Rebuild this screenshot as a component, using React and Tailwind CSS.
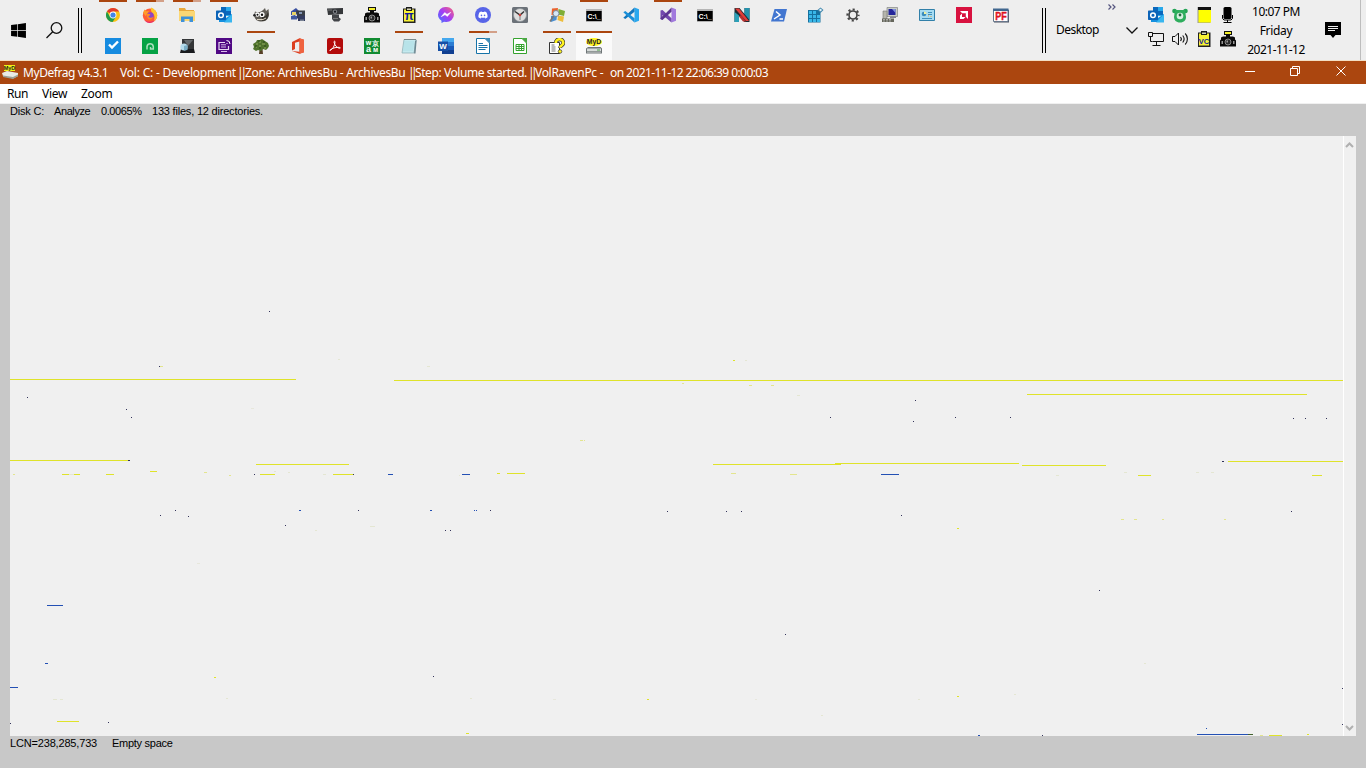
import React from "react";
import { FaDiscord, FaWindows } from "react-icons/fa";

const Svg = ({ children, className = "h-4 w-4" }) => (
  <svg viewBox="0 0 16 16" className={"block shrink-0 " + className}>
    {children}
  </svg>
);

const T = ({ x, y, s, f = "#fff", children, w = "700" }) => (
  <text x={x} y={y} fontSize={s} fill={f} fontWeight={w} textAnchor="middle" fontFamily="Liberation Sans, sans-serif">
    {children}
  </text>
);

const Chrome = () => (
  <Svg>
    <circle cx="8" cy="8" r="7" fill="#fbc116" />
    <path d="M8 8 1.9 4.5A7 7 0 0 1 14.1 4.5H8z" fill="#e33b2e" />
    <path d="M1.9 4.5A7 7 0 0 0 7.6 15L11 9.8 8 8 5 9.7z" fill="#229a4b" />
    <circle cx="8" cy="8" r="3.4" fill="#fff" />
    <circle cx="8" cy="8" r="2.6" fill="#4285e8" />
  </Svg>
);
const Firefox = () => (
  <Svg>
    <circle cx="8" cy="8.6" r="7.2" fill="#ff5b36" />
    <path d="M9 .6c3 1 6.2 4 6.2 7.6 0 3-1.700 5.200-3.600 6.200 1.600-3 1.300-6-.7-7.800C9.500 5.200 8.500 3.600 9 .6z" fill="#ffc52e" />
    <path d="M1 5.500 2.600 2.500 4.500 4.200 7 4 5.500 6.500l-2 2.500z" fill="#ff9a2a" />
    <circle cx="8.300" cy="8.600" r="3.400" fill="#8b46c9" />
    <path d="M4.500 7.300c1.500-.8 3-.5 4 .5L6.300 9.500c1 1.600 3.500 1.500 5 .3-.6 2-2 2.700-3.500 2.600-2-.2-3.500-2.200-3.300-5.100z" fill="#ff8a23" />
    <path d="M2.500 13c3 2.500 7.500 2.500 10.300-.3-1 2.300-3.200 3.200-5.300 3.200-2 0-3.800-1-5-2.900z" fill="#e8266d" />
  </Svg>
);
const Folder = () => (
  <Svg>
    <path d="M0 1h6l1 2h8v5H0z" fill="#e9a93c" />
    <path d="M0 4h16v10H0z" fill="#fbd774" />
    <path d="M2 15v-5.500h12V15h-3.500v-3h-5v3z" fill="#3f92d8" />
  </Svg>
);
const Outlook = () => (
  <Svg>
    <path d="M5 0h10v9H5z" fill="#28a8ea" />
    <path d="M5 0h5v4H5zM10 4h5v4h-5z" fill="#0a68bd" />
    <path d="M3 7l7 4 6-4v8H3z" fill="#1590df" />
    <path d="M16 7v8.500H8z" fill="#38b6ef" />
    <rect x="0" y="3.500" width="10" height="9.500" rx=".7" fill="#0b63b8" />
    <circle cx="5" cy="8.200" r="2.300" fill="none" stroke="#fff" strokeWidth="1.500" />
  </Svg>
);
const Gimp = () => (
  <Svg>
    <path d="M1 8 2 4.500C5 6 9 5 12 1l1 3 2.500-2L16 7c0 4-2.500 7.500-7 7.500S2 13 1 8z" fill="#5f5c56" />
    <path d="M9 10c3 0 5-2 6-5l.5 3c-.5 4-3 6-6.500 6z" fill="#37352f" />
    <circle cx="4.300" cy="7.500" r="2.200" fill="#fff" />
    <circle cx="9" cy="7.500" r="2.600" fill="#fff" />
    <circle cx="4.500" cy="7.700" r="1" fill="#111" />
    <circle cx="9" cy="7.700" r="1.200" fill="#111" />
    <circle cx="1.500" cy="8.300" r="1.300" fill="#222" />
    <path d="M4 12.500h6l3-1.500" stroke="#d8d0c0" strokeWidth="1" fill="none" />
  </Svg>
);
const Scanner = () => (
  <Svg>
    <path d="M1 4.500 6 1l3 3-4 5-4-1z" fill="#3a50a0" />
    <path d="M2 5h4v3H2z" fill="#e9d466" />
    <path d="M6 3.500h9v5.500H7z" fill="#393e48" />
    <path d="M9 5h3v2H9z" fill="#8395b5" />
    <path d="M1 9h6v3.500H1z" fill="#3f58a0" />
    <path d="M7 8.500h8v3H7zM8 11h7v3H8z" fill="#333b60" />
    <path d="M10 12.500h4v1.500h-4z" fill="#798293" />
  </Svg>
);
const Webcam = () => (
  <Svg>
    <path d="M0 1.500 16 1v6L1 8z" fill="#35373a" />
    <circle cx="8" cy="4.700" r="2.200" fill="#808388" />
    <circle cx="8" cy="4.700" r="1.100" fill="#16191f" />
    <path d="M5 7.500h7v3l2 1.500-2 2.500H7L5 12z" fill="#424448" />
    <path d="M1 2.500h4v1H1zM6 11h5v1H6z" fill="#777" />
  </Svg>
);
const Camera = () => (
  <Svg>
    <path d="M4 0h8v4H4z" fill="#111" />
    <path d="M5 1h6v2H5z" fill="#f4f02a" />
    <path d="M6 4h4v2H6zM1 6.500 3 5.500h10l2 1v2l1 1v6H0v-6l1-1z" fill="#0a0a0a" />
    <circle cx="8" cy="11" r="3" fill="#2a2a2a" stroke="#a5a5a5" strokeWidth=".8" />
    <path d="M6.500 9.500h1.500v2H6.500zM1.500 10H3v3H1.500zM13 10h1.500v3H13z" fill="#999" />
  </Svg>
);
const Clip = ({ t = "π" }) => (
  <Svg>
    <path d="M2 1.500h12.500v14.500H2z" fill="#222" />
    <path d="M3 2.500h10v12H3z" fill="#f8f236" />
    <path d="M5 0h6v4H5z" fill="#1a1a1a" />
    <path d="M6 1.500h4V3H6z" fill="#d6d6b6" />
    <T x="8" y="13" s={t === "π" ? 12 : 7.500} f="#101b9c">{t}</T>
  </Svg>
);
const Messenger = () => (
  <Svg>
    <defs>
      <linearGradient id="msg" x1="0" y1="1" x2="1" y2="0">
        <stop offset="0" stopColor="#3b78ff" />
        <stop offset=".5" stopColor="#a33df5" />
        <stop offset="1" stopColor="#ff6676" />
      </linearGradient>
    </defs>
    <path d="M8 0a7.600 7.600 0 0 1 8 7.500A7.600 7.600 0 0 1 8 15l-2-.3L3.500 16v-2.300A7.300 7.300 0 0 1 0 7.500 7.600 7.600 0 0 1 8 0z" fill="url(#msg)" />
    <path d="M3.200 9.700 6.700 5.600 9 7.300 12.800 5.300 9.400 9.400 7 7.700z" fill="#fff" stroke="#fff" strokeWidth=".5" />
  </Svg>
);
const Discord = () => (
  <div className="flex h-4 w-4 items-center justify-center rounded-full bg-[#5865e8]">
    <FaDiscord size={10} color="#fff" />
  </div>
);
const Clock = () => (
  <Svg>
    <rect width="16" height="16" rx="1.500" fill="#6b7178" />
    <circle cx="8" cy="8" r="6.500" fill="#dedede" stroke="#8a9096" strokeWidth=".7" />
    <path d="M3 4.500 8 8l4-3.500" stroke="#333" strokeWidth="1.500" fill="none" />
    <path d="M8 8v5" stroke="#777" />
    <circle cx="8" cy="8" r="1.300" fill="#c8403a" />
  </Svg>
);
const Flag = () => (
  <Svg>
    <path d="M3 1.500 9 1l-.7 6-5.800 1z" fill="#e9622e" />
    <path d="M9.500 2 16 4l-1 5-6-1.500z" fill="#7fae35" />
    <path d="M2 9l6-1-.5 5L2 15z" fill="#4b8fd0" />
    <path d="M9 8.500l6 1-1 5.500-5.500-2z" fill="#edbd3c" />
    <circle cx="7" cy="6.500" r="3" fill="#d5e8f6" stroke="#7d8791" />
    <path d="M4.500 9 1 14.500" stroke="#777" strokeWidth="1.600" />
  </Svg>
);
const Cmd = () => (
  <Svg>
    <path d="M0 2h16v12.500H0z" fill="#777" />
    <path d="M0 2h16v2H0z" fill="#b5b5b5" />
    <path d="M.5 4h15v10H.5z" fill="#000" />
    <T x="8" y="11.500" s="7">C:\_</T>
  </Svg>
);
const VsCode = () => (
  <Svg>
    <path d="M11.500.5 16 2.300v11.400l-4.500 1.800z" fill="#29a8ee" />
    <path d="M11.500.5v4.200L2.300 12 .3 10.800z" fill="#1276bd" />
    <path d="M11.500 15.500v-4.200L2.300 4 .3 5.200z" fill="#1a8fd8" />
  </Svg>
);
const Vs = () => (
  <Svg>
    <path d="M11.500.5 16 2.300v11.400l-4.500 1.800z" fill="#a179dd" />
    <path d="M.5 3.500 2.500 3l9 8.300v4.200L2.500 8v5L.5 12z" fill="#7348ae" />
    <path d="M11.500.5v4.200L2.500 13 .5 12v-1L5 7z" fill="#5d3591" />
  </Svg>
);
const NIcon = () => (
  <Svg>
    <path d="M.5 1h5l5 6V1h5v14h-5L5 9v6H.5z" fill="#1e2b33" />
    <path d="M.5 5 5 8.500V15H.5z" fill="#2aa0b8" />
    <path d="M10.500 1h5v12l-5-6z" fill="#2492ac" />
    <path d="M1 1.500h4L15 14h-3z" fill="#e23c37" />
    <path d="M5 9.500 7 8l5 6.500H9z" fill="#b9302f" />
  </Svg>
);
const PShell = () => (
  <Svg>
    <path d="M3.500 2H16l-3 12.500H0z" fill="#4276d0" />
    <path d="M5 4.500 9 8l-6 4M8.500 12H12" stroke="#fff" strokeWidth="1.500" fill="none" />
  </Svg>
);
const Regedit = () => (
  <Svg>
    <path d="M0 3h12.500v12.500H0z" fill="#16719f" />
    <path d="M1 4h3v3H1zM5 4h3v3H5zM1 8h3v3H1zM5 8h3v3H5zM9 8h3v3H9zM1 12h3v3H1zM5 12h3v3H5zM9 12h3v3H9z" fill="#39b7e8" />
    <path d="M12.500.500 15.500 3l-3 3-3-3z" fill="#4388ad" />
    <circle cx="12.500" cy="3" r="1.200" fill="#e2f2fa" />
  </Svg>
);
const Gear = () => (
  <Svg>
    <circle cx="8" cy="8" r="5.600" fill="none" stroke="#444" strokeWidth="2" strokeDasharray="2.200 2.198" strokeDashoffset="1.100" />
    <circle cx="8" cy="8" r="4" fill="none" stroke="#444" strokeWidth="1.700" />
  </Svg>
);
const Network = () => (
  <Svg>
    <path d="M5 .5h10.500v9H5z" fill="#c9cec6" stroke="#777" strokeWidth=".6" />
    <path d="M6.500 2h7v6h-7z" fill="#25279b" />
    <path d="M10 2h3.500v4z" fill="#8291de" />
    <path d="M1 4h4v8H1z" fill="#b5b5ac" stroke="#777" strokeWidth=".6" />
    <path d="M0 11.500h12V15H0z" fill="#65665b" />
    <path d="M1 12.500h9M1 14h9" stroke="#ccc" strokeDasharray="2 1" strokeWidth=".7" />
    <path d="M8 9.500h6V11H8z" fill="#85868b" />
  </Svg>
);
const Panel = () => (
  <Svg>
    <path d="M.5 2.500h15v11H.5z" fill="#a7dcf2" stroke="#3180a9" />
    <circle cx="5" cy="7" r="2.300" fill="#3b8cbb" />
    <path d="M5 7V4.500A2.500 2.500 0 0 1 7.500 7z" fill="#f4f2a0" />
    <path d="M9 5.500h4M9 7.500h4M3 11.500h10" stroke="#4290ba" />
    <path d="M9.500 8.500v1M12 9v1" stroke="#e3a73e" />
  </Svg>
);
const Amd = () => (
  <Svg>
    <path d="M0 0h16v16H0z" fill="#d8123f" />
    <path d="M4 4h8v8L9.800 9.800V6.200H6.200z" fill="#fff" />
    <path d="M4 8.500 6 6.500V10h3.500l-2 2H4z" fill="#fff" />
  </Svg>
);
const Pf = () => (
  <Svg>
    <path d="M1 3h15v12.500H1z" fill="#4b5363" />
    <path d="M.5 2.500h14.500v12H.5z" fill="#fff" stroke="#67768b" />
    <path d="M0 1.500h15.500V4H0z" fill="#41678f" />
    <text x="8" y="13" fontSize="10.500" fill="#e0141e" stroke="#e0141e" strokeWidth=".4" fontWeight="700" textAnchor="middle" fontFamily="Liberation Sans, sans-serif" textLength="11.500" lengthAdjust="spacingAndGlyphs">PF</text>
  </Svg>
);

const Todo = () => (
  <Svg>
    <path d="M0 0h16v16H0z" fill="#168be0" />
    <path d="M4 6.500 7 9.500 13 3.500" stroke="#fff" strokeWidth="2.400" fill="none" />
  </Svg>
);
const GreenArc = () => (
  <Svg>
    <path d="M0 0h16v16H0z" fill="#05a245" />
    <path d="M5 11.500V8.500a3.200 3.200 0 0 1 6.300 0v2.500H8.500V9" stroke="#a9e0bd" strokeWidth="1.500" fill="none" />
  </Svg>
);
const Drive = () => (
  <Svg>
    <path d="M3 1h12v10H3z" fill="#343638" />
    <path d="M5 2h9L9 8z" fill="#666a6d" />
    <path d="M2 11h13l1 4H1z" fill="#191b1e" />
    <circle cx="5" cy="9" r="3.600" fill="#b6dcec" />
    <path d="M5 8l3.500-1v5L5 12.500z" fill="#79aec7" />
  </Svg>
);
const Purple = () => (
  <Svg>
    <path d="M0 0h16v16H0z" fill="#500884" />
    <path d="M12.500 8v3.500h-9.500V4.500h6" fill="none" stroke="#e7d8f2" strokeWidth="1.200" />
    <path d="M5 6.800h5M5 9h5M5 13.500h6" stroke="#d8bce9" />
    <path d="M10.500 5.500h1M10.500 2.500a3.500 3.500 0 0 1 3.500 3.500" stroke="#fff" fill="none" />
  </Svg>
);
const Tree = () => (
  <Svg>
    <path d="M7 8h2.200l.8 8H6z" fill="#574026" />
    <path d="M0 6 3 4l1-2 3 0 2-1 3 2 3 2 1 3-1 2-2 2-3-1-2 2-3-1-2 1-3-2 1-2z" fill="#50732c" />
    <path d="M3 6h2M6 4h2M9 6h3M6 8h2M3 9h1M11 10h2" stroke="#91ac61" />
    <path d="M5 3h2M10 4h2M11 8h2M2 8h2M6 10h2" stroke="#28461a" />
  </Svg>
);
const Office = () => (
  <Svg>
    <path d="M2 4 9.500.2 14 1.700v12.600L9.500 15.800 2 13l7.500.7V3.500L5 4.700V11l-3 1.500z" fill="#dc3e20" />
    <path d="M9.500.2 14 1.700v12.600l-4.500 1.500z" fill="#ef6340" />
  </Svg>
);
const Acrobat = () => (
  <Svg>
    <rect width="16" height="16" rx="2" fill="#b30b0b" />
    <path d="M3 12.500c2.500-1 5-5 5-8.500 0-1.500-1.300-1-.9.500.8 3 3 5.500 5.500 5.800 1.500 0 .5-1.200-1.500-1-3 .1-5.500.9-7.300 2.200-1 .8-1.400 1-.8 1z" stroke="#fff" strokeWidth="1" fill="none" />
  </Svg>
);
const CharMap = () => (
  <Svg>
    <path d="M0 0h16v16H0z" fill="#118b31" />
    <T x="4.500" y="7" s="7">w</T>
    <T x="11.500" y="7.500" s="7">京</T>
    <T x="4.500" y="14" s="9">a</T>
    <T x="11.500" y="14" s="7">м</T>
  </Svg>
);
const Notepad = () => (
  <Svg>
    <path d="M3 1.500h12L13 15H1z" fill="#c4e9ee" stroke="#86abb0" strokeWidth=".7" />
    <path d="M14 3 13 15.500h1.500L15.700 2z" fill="#6b8791" />
    <path d="M3 4h10M3 6h10M2.500 8h10M2.500 10h10M2 12h10" stroke="#96d0d8" strokeWidth=".5" />
    <path d="M3.500 1.500h11" stroke="#555" strokeDasharray="1 1" />
  </Svg>
);
const Word = () => (
  <Svg>
    <path d="M4 0h12v16H4z" fill="#2b7cd3" />
    <path d="M4 0h12v4H4z" fill="#45a8ee" />
    <path d="M4 8h12v4H4z" fill="#1859b8" />
    <path d="M4 12h12v4H4z" fill="#103f91" />
    <path d="M0 3.500h10v9.500H0z" fill="#164fa5" />
    <T x="5" y="11" s="8">W</T>
  </Svg>
);
const Doc = ({ sheet }) => (
  <Svg>
    <path d="M1.500.5h8.500l4.500 4.500v10.500h-13z" fill="#fff" stroke={sheet ? "#35a32e" : "#1673a8"} />
    <path d="M9.500 0H15v5.500z" fill={sheet ? "#4aa843" : "#3e8cb6"} />
    {sheet ? (
      <path d="M4 6.500h8v6H4zM4 8.500h8M4 10.500h8M7 6.500v6M9.500 6.500v6" fill="none" stroke="#35a32e" />
    ) : (
      <path d="M3.500 5.500H8M3.500 7.500h9M3.500 9.500h9M3.500 11.500h7" stroke="#1673a8" />
    )}
  </Svg>
);
const Help = () => (
  <Svg>
    <path d="M.5 4.500h10V15.500H.5z" fill="#fff" stroke="#333" />
    <path d="M2.500 7h3M2.500 9h4M2.500 11h4M2.500 13h4" stroke="#777" />
    <path d="M6.800 5c0-5 7.500-5 7.500 0 0 2.500-3.300 2.500-3.300 5" fill="none" stroke="#333" strokeWidth="3.800" />
    <path d="M6.800 5c0-5 7.500-5 7.500 0 0 2.500-3.300 2.500-3.300 4.700" fill="none" stroke="#fff21f" strokeWidth="2.600" />
    <circle cx="11" cy="13.500" r="1.800" fill="#fff21f" stroke="#333" strokeWidth=".7" />
  </Svg>
);
const MyD = () => (
  <Svg>
    <ellipse cx="8" cy="4" rx="8" ry="4" fill="#fff31c" />
    <T x="8" y="6.300" s="6.800" f="#222">MyD</T>
    <path d="M0 10.500 2 9h12.500l1.500 1.500v5H0z" fill="#6e7577" />
    <path d="M1 10.500h14v4H1z" fill="#d8dcda" />
    <path d="M1 13.500h14" stroke="#929998" />
    <path d="M11 12h3" stroke="#48a044" />
  </Svg>
);
const MyDSmall = () => (
  <svg viewBox="0 0 16 16" className="h-4 w-4">
    <path d="M2 0h11v6H2z" fill="#eff016" />
    <T x="7.500" y="5" s="5.500" f="#222">MyD</T>
    <path d="M0 8 5 6l11 2v3l-5 2.500L1 11z" fill="#e9eae6" />
    <path d="M1 10.500 11 12l5-2.500v1.800L11 14 1 12z" fill="#9a9f98" />
  </svg>
);
const Sticky = () => (
  <Svg>
    <path d="M1.500 0h13v16h-13z" fill="#999" />
    <path d="M2 0h13v3H2z" fill="#111" />
    <path d="M2.500 3h12.500v12.500H2.500z" fill="#ff0" />
  </Svg>
);
const Mic = () => (
  <Svg>
    <rect x="3.500" y="0" width="8" height="12" rx="1.500" fill="#000" />
    <path d="M2.500 8v3.500l1.500 1.500h7l1.500-1.500V8M7.500 13v2.500M3.500 15.500h8" stroke="#000" strokeWidth="1" fill="none" />
  </Svg>
);
const Bear = () => (
  <Svg>
    <circle cx="2.500" cy="4" r="2.300" fill="#23a455" />
    <circle cx="13.500" cy="4" r="2.300" fill="#23a455" />
    <path d="M3 3h10l1 7c0 3-2 5.500-6 5.500S2 13 2 10z" fill="#2ead5d" />
    <circle cx="8" cy="9" r="3.300" fill="#d5f0df" />
    <circle cx="8" cy="8" r="1.400" fill="#246840" />
  </Svg>
);
const Pc = () => (
  <Svg>
    <path d="M4.500 2.500h11v8h-11M8.500 10.500v3.500M4.500 14.500h8" fill="none" stroke="#111" />
    <path d="M.5 1.500h4v4h-4zM2.500 5.500v5h2" fill="#eee" stroke="#111" />
  </Svg>
);
const Speaker = () => (
  <svg viewBox="0 0 17 16" className="block h-4 w-[17px]">
    <path d="M.5 5.500H3L6.500 2v12L3 10.500H.5z" fill="none" stroke="#111" />
    <path d="M8.500 6a3 3 0 0 1 0 4M10.700 4.500a5.500 5.500 0 0 1 0 7M13.200 2.500a8 8 0 0 1 0 11" fill="none" stroke="#111" strokeWidth="1.100" />
  </svg>
);

const topRow = [
  [Chrome, 1], [Firefox, 2], [Folder, 2], [Outlook, 1], [Gimp, 0], [Scanner, 0], [Webcam, 0], [Camera, 0],
  [Clip, 0], [Messenger, 0], [Discord, 0], [Clock, 0], [Flag, 0], [Cmd, 1], [VsCode, 0], [Vs, 1], [Cmd, 0],
  [NIcon, 0], [PShell, 0], [Regedit, 0], [Gear, 0], [Network, 0], [Panel, 0], [Amd, 0], [Pf, 0],
];
const Calc = () => <Doc sheet />;
const bottomRow = [
  [Todo, 0], [GreenArc, 0], [Drive, 0], [Purple, 0], [Tree, 1], [Office, 0], [Acrobat, 0], [CharMap, 0],
  [Notepad, 1], [Word, 0], [Doc, 2], [Calc, 0], [Help, 1], [MyD, 3],
];

const barClass = ["opacity-0 w-7", "bg-[#ab460f] w-7", "bg-[#ab460f] w-5", "bg-[#ab460f] w-9"];

function Slot({ Icon, state }) {
  return (
    <div className={"flex h-full w-[37px] shrink-0 flex-col items-center pr-px " + (state === 3 ? "bg-linear-to-r from-[#fafafa] from-[36px] to-[#eee] to-[36px]" : "")}>
      <div className="flex h-[2px]">
        <div className={barClass[state]} />
        {state === 2 && <div className="w-2 bg-[#d3a088]" />}
      </div>
      <div className="pt-[5px]">
        <Icon />
      </div>
    </div>
  );
}

const Y = "#dfe32a";
const B = "#2350b4";
const D = "#33335a";
const P = "#e3e58e";
const F = "#e4e6d2";
const G = "#e7e7dc";
/* x, y, length, colour */
const marks = [
  [269, 311, 1, D], [159, 366, 1, D], [160, 366, 3, P], [338, 359, 2, F], [427, 366, 3, F],
  [733, 360, 2, Y], [745, 360, 2, F], [682, 383, 2, P], [749, 385, 3, P], [771, 385, 3, P], [797, 395, 3, F],
  [10, 379, 286, Y], [394, 380, 949, Y], [1027, 394, 280, Y],
  [27, 397, 1, D], [126, 409, 1, D], [131, 417, 1, D], [251, 408, 3, G],
  [915, 400, 1, D], [830, 417, 1, D], [913, 421, 1, D], [955, 417, 1, D], [1010, 417, 1, D],
  [1293, 418, 1, D], [1305, 418, 1, D], [1326, 418, 1, D],
  [580, 440, 3, P], [584, 440, 1, P],
  [10, 460, 118, Y], [128, 460, 2, D], [256, 464, 93, Y], [713, 464, 128, Y], [835, 463, 184, Y],
  [1022, 465, 84, Y], [1222, 461, 2, D], [1228, 461, 115, Y],
  [13, 474, 2, P], [62, 474, 7, Y], [69, 474, 5, F], [74, 474, 6, Y], [106, 474, 8, Y], [150, 471, 7, Y],
  [204, 472, 3, P], [229, 475, 2, P], [254, 474, 1, D], [260, 474, 15, Y], [274, 471, 2, F], [288, 472, 2, F],
  [323, 474, 3, F], [333, 474, 20, Y], [353, 474, 1, D], [388, 474, 5, B], [462, 474, 8, B],
  [497, 473, 3, Y], [507, 473, 18, Y], [459, 475, 1, F], [731, 473, 5, P], [790, 474, 7, P], [881, 474, 18, B],
  [1056, 475, 3, F], [1124, 472, 3, F], [1138, 475, 13, Y], [1196, 472, 3, F], [1211, 472, 3, F], [1312, 475, 10, Y],
  [175, 510, 1, D], [160, 515, 1, D], [188, 516, 1, D], [299, 510, 2, B], [358, 510, 1, D], [430, 510, 2, B],
  [474, 510, 1, B], [476, 510, 1, B], [490, 510, 1, D], [285, 525, 1, D], [445, 530, 1, D], [450, 530, 1, D],
  [370, 526, 5, F], [315, 530, 2, F], [667, 511, 1, D], [726, 511, 1, D], [741, 511, 1, D], [901, 515, 1, D],
  [1291, 511, 1, D], [1121, 519, 3, P], [1134, 519, 3, P], [1162, 519, 2, P], [1224, 519, 2, P], [957, 528, 2, Y],
  [197, 563, 3, G], [47, 605, 16, B], [1099, 590, 1, D], [785, 634, 1, D], [45, 663, 3, B], [214, 677, 2, Y],
  [433, 676, 1, D], [10, 687, 8, B], [53, 699, 4, F], [60, 699, 3, F], [226, 698, 2, F], [470, 698, 2, F],
  [553, 699, 3, G], [647, 699, 2, Y], [755, 699, 2, G], [918, 699, 2, F], [957, 696, 2, Y], [1014, 694, 2, F],
  [1144, 663, 2, F], [821, 715, 2, F], [57, 721, 22, Y], [10, 723, 1, D], [108, 722, 1, D], [466, 733, 3, Y],
  [1342, 688, 1, D], [1342, 724, 1, D], [1206, 728, 1, B], [978, 735, 2, B], [1042, 735, 1, D],
  [1197, 734, 51, B], [1248, 734, 5, "#42622e"], [1260, 735, 3, P], [1269, 735, 13, Y], [1307, 734, 2, Y],
];

const ui = "font-['Noto_Sans','Open_Sans',sans-serif]";

export default function App() {
  return (
    <div className={"flex h-[768px] w-[1366px] flex-col overflow-hidden bg-[#c8c8c8] text-black " + ui}>
      <header className="flex h-[61px] shrink-0 border-b border-[#f3dfc4] bg-[#eeeeee]">
        <div className="flex w-[95px] shrink-0 items-start pt-[22px] pl-[10px]">
          <FaWindows size={17} color="#000" className="-mr-px shrink-0" />
          <svg viewBox="0 0 17 17" className="ml-5 h-[17px] w-[17px]">
            <circle cx="10.500" cy="6" r="5.300" fill="none" stroke="#111" strokeWidth="1.300" />
            <path d="M6.700 9.800.5 16" stroke="#111" strokeWidth="1.300" />
          </svg>
          <div className="-mt-[14px] ml-[15px] h-[45px] w-1 border-x border-black" />
        </div>
        <div className="flex w-[946px] shrink-0 flex-col">
          <div className="flex h-[31px]">
            {topRow.map(([I, s], i) => <Slot key={i} Icon={I} state={s} />)}
          </div>
          <div className="flex h-[29px]">
            {bottomRow.map(([I, s], i) => <Slot key={i} Icon={I} state={s} />)}
          </div>
        </div>
        <div className="flex grow">
          <div className="mt-2 ml-px h-[45px] w-1 shrink-0 border-x border-black" />
          <div className="ml-[10px] w-[92px] shrink-0">
            <div className="flex h-[20px] justify-end pt-[4px] pr-[32px]">
              <svg viewBox="0 0 8 6" className="h-[6px] w-2">
                <path d="M.5.5 3 3 .5 5.500M4.500.5 7 3 4.500 5.500" fill="none" stroke="#55557f" strokeWidth="1.200" />
              </svg>
            </div>
            <div className="flex items-center justify-between pr-[10px]">
              <span className="text-[12px] leading-5 tracking-[-0.55px] whitespace-nowrap">Desktop</span>
              <svg viewBox="0 0 12 7" className="h-[7px] w-3">
                <path d="M.5.5 6 6 11.500.5" fill="none" stroke="#111" strokeWidth="1.300" />
              </svg>
            </div>
          </div>
          <div className="grid h-[47px] w-[88px] shrink-0 grid-cols-[24px_24px_24px_16px] content-between pt-[7px] [&>*]:justify-self-start">
            <Outlook /><Bear /><Sticky /><Mic />
            <Pc /><Speaker /><Clip t="VC" /><Camera />
          </div>
          <div className="ml-[8px] w-[64px] shrink-0 pt-[2px] text-center text-[12px] leading-[19px] whitespace-nowrap">
            <div className="tracking-[-0.5px]">10:07 PM</div>
            <div className="tracking-[-0.3px]">Friday</div>
            <div className="tracking-[-0.5px]">2021-11-12</div>
          </div>
          <svg viewBox="0 0 16 16" className="mt-[22px] ml-[17px] h-4 w-4">
            <path d="M0 0h16v13h-5.500L8 16l-2.500-3H0z" fill="#000" />
            <path d="M3 4.500h10M3 6.500h10M3 8.500h7" stroke="#eee" />
          </svg>
          <div className="ml-[19px] w-px bg-[#bdbdbd]" />
        </div>
      </header>

      <div className="flex h-[23px] shrink-0 items-center bg-[#ab460f] pl-[2px] text-white">
        <MyDSmall />
        <div className="flex grow pl-[5px] text-[12px] leading-[22px] whitespace-pre">
          <span className="w-[97px] tracking-[-0.43px]">MyDefrag v4.3.1</span>
          <span className="w-[117px] tracking-[-0.2px]">Vol: C: - Development</span>
          <span className="w-[8px] tracking-[-3px]">||</span>
          <span className="w-[163px] tracking-[-0.32px]">Zone: ArchivesBu - ArchivesBu</span>
          <span className="w-[7px] tracking-[-3.5px]">||</span>
          <span className="w-[113px] tracking-[-0.42px]">Step: Volume started.</span>
          <span className="w-[7px] tracking-[-3.5px]">||</span>
          <span className="w-[75px] tracking-[-0.3px]">VolRavenPc -</span>
          <span className="tracking-[-0.57px]">on 2021-11-12 22:06:39 0:00:03</span>
        </div>
        <svg viewBox="0 0 102 12" className="mr-[19px] mb-[3px] h-3 w-[102px] shrink-0" fill="none" stroke="#fff">
          <path d="M0 6.500h10M45.500 3.500h7v7h-7zM47.500 3.500v-2h7v7h-2M91.500 1.500l9 9M100.500 1.500l-9 9" />
        </svg>
      </div>

      <nav className="flex h-5 shrink-0 items-center border-b border-[#f0f0f0] bg-white pl-[7px] text-[12px]">
        <span className="w-[35px] tracking-[-0.4px]">Run</span>
        <span className="w-[39px] tracking-[-0.3px]">View</span>
        <span className="tracking-[-0.3px]">Zoom</span>
      </nav>

      <main className="flex grow flex-col pl-[10px] font-['Liberation_Sans',Arial,sans-serif] text-[11px] leading-[14px] whitespace-nowrap">
        <div className="flex h-8">
          <span className="w-[44px] tracking-[-0.2px]">Disk C:</span>
          <span className="w-[47px] tracking-[-0.4px]">Analyze</span>
          <span className="w-[51px] tracking-[-0.4px]">0.0065%</span>
          <span className="tracking-[-0.2px]">133 files, 12 directories.</span>
        </div>
        <div className="flex h-[600px] w-[1346px] bg-[#f0f0f0]">
          <svg viewBox="10 136 1333 600" className="h-[600px] w-[1333px] shrink-0" shapeRendering="crispEdges">
            {marks.map(([x, y, w, c], i) => (
              <rect key={i} x={x} y={y} width={w} height="1" fill={c} />
            ))}
          </svg>
          <div className="flex w-[13px] flex-col items-center justify-between border-l border-white pt-[6px] pr-px pb-[5px]">
            <svg viewBox="0 0 9 6" className="h-[6px] w-[9px]"><path d="M1 5 4.500 1.500 8 5" fill="none" stroke="#b0b0b0" strokeWidth="2" /></svg>
            <svg viewBox="0 0 9 6" className="h-[6px] w-[9px]"><path d="M1 1l3.500 3.500L8 1" fill="none" stroke="#b0b0b0" strokeWidth="2" /></svg>
          </div>
        </div>
        <div className="flex">
          <span className="w-[102px] tracking-[-0.17px]">LCN=238,285,733</span>
          <span className="tracking-[-0.27px]">Empty space</span>
        </div>
      </main>
    </div>
  );
}
